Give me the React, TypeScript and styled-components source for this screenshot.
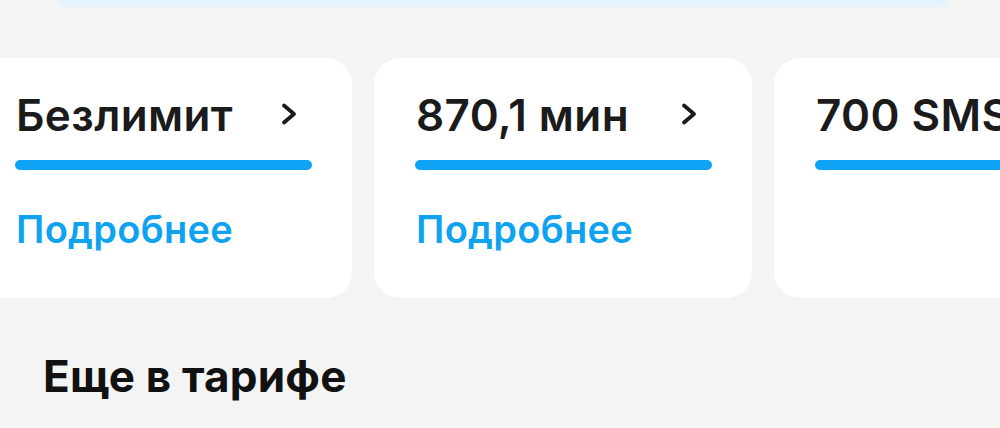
import React from "react";
import styled, { createGlobalStyle } from "styled-components";

const Global = createGlobalStyle`
  html, body {
    margin: 0;
    padding: 0;
    background: #f4f4f4;
    font-family: Inter, "Noto Sans", sans-serif;
    -webkit-font-smoothing: antialiased;
  }
`;

const Page = styled.div`
  width: 1000px;
  height: 428px;
  overflow: hidden;
  display: flex;
  flex-direction: column;
`;

const BannerTail = styled.div`
  margin: 0 52px 0 57px;
  height: 7px;
  background: #e4f3fc;
  border-radius: 0 0 10px 10px;
`;

const Carousel = styled.div`
  display: flex;
  gap: 22px;
  margin: 51px 0 0 -26px;
`;

const Card = styled.div`
  flex: 0 0 378px;
  height: 240px;
  box-sizing: border-box;
  padding: 31px 40px 0 41px;
  background: #ffffff;
  border-radius: 26px;
  display: flex;
  flex-direction: column;
`;

const TitleRow = styled.div`
  display: flex;
  align-items: center;
  justify-content: space-between;
  height: 52px;
`;

const Amount = styled.span`
  font-size: 44px;
  font-weight: 600;
  color: #1b1b1b;
  letter-spacing: 0.4px;
  white-space: nowrap;
  padding-left: 1px;
`;

const Chevron = styled.svg`
  width: 18px;
  height: 24px;
  margin: 0 14px 2px 0;
  flex: none;
`;

const Bar = styled.div`
  margin-top: 19px;
  height: 10px;
  border-radius: 5px;
  background: #0ea3f5;
`;

const More = styled.span`
  margin-top: 36px;
  padding-left: 1px;
  font-size: 38px;
  font-weight: 600;
  color: #0fa2f1;
  letter-spacing: 0.3px;
`;

const SectionTitle = styled.h2`
  margin: 51px 0 0 43px;
  font-size: 44px;
  font-weight: 700;
  color: #111111;
  letter-spacing: 0.2px;
`;

type Pack = { amount: string; more: boolean; chevron: boolean };

const packs: Pack[] = [
  { amount: "Безлимит", more: true, chevron: true },
  { amount: "870,1 мин", more: true, chevron: true },
  { amount: "700 SMS", more: false, chevron: true },
];

const Arrow = () => (
  <Chevron viewBox="0 0 18 24" fill="none">
    <path
      d="M4 3.5 L14 12 L4 20.5"
      stroke="#1b1b1b"
      strokeWidth="3.8"
      strokeLinecap="round"
      strokeLinejoin="round"
    />
  </Chevron>
);

export default function App() {
  return (
    <>
      <Global />
      <Page>
        <BannerTail />
        <Carousel>
          {packs.map((p) => (
            <Card key={p.amount}>
              <TitleRow>
                <Amount>{p.amount}</Amount>
                {p.chevron && <Arrow />}
              </TitleRow>
              <Bar />
              {p.more && <More>Подробнее</More>}
            </Card>
          ))}
        </Carousel>
        <SectionTitle>Еще в тарифе</SectionTitle>
      </Page>
    </>
  );
}
